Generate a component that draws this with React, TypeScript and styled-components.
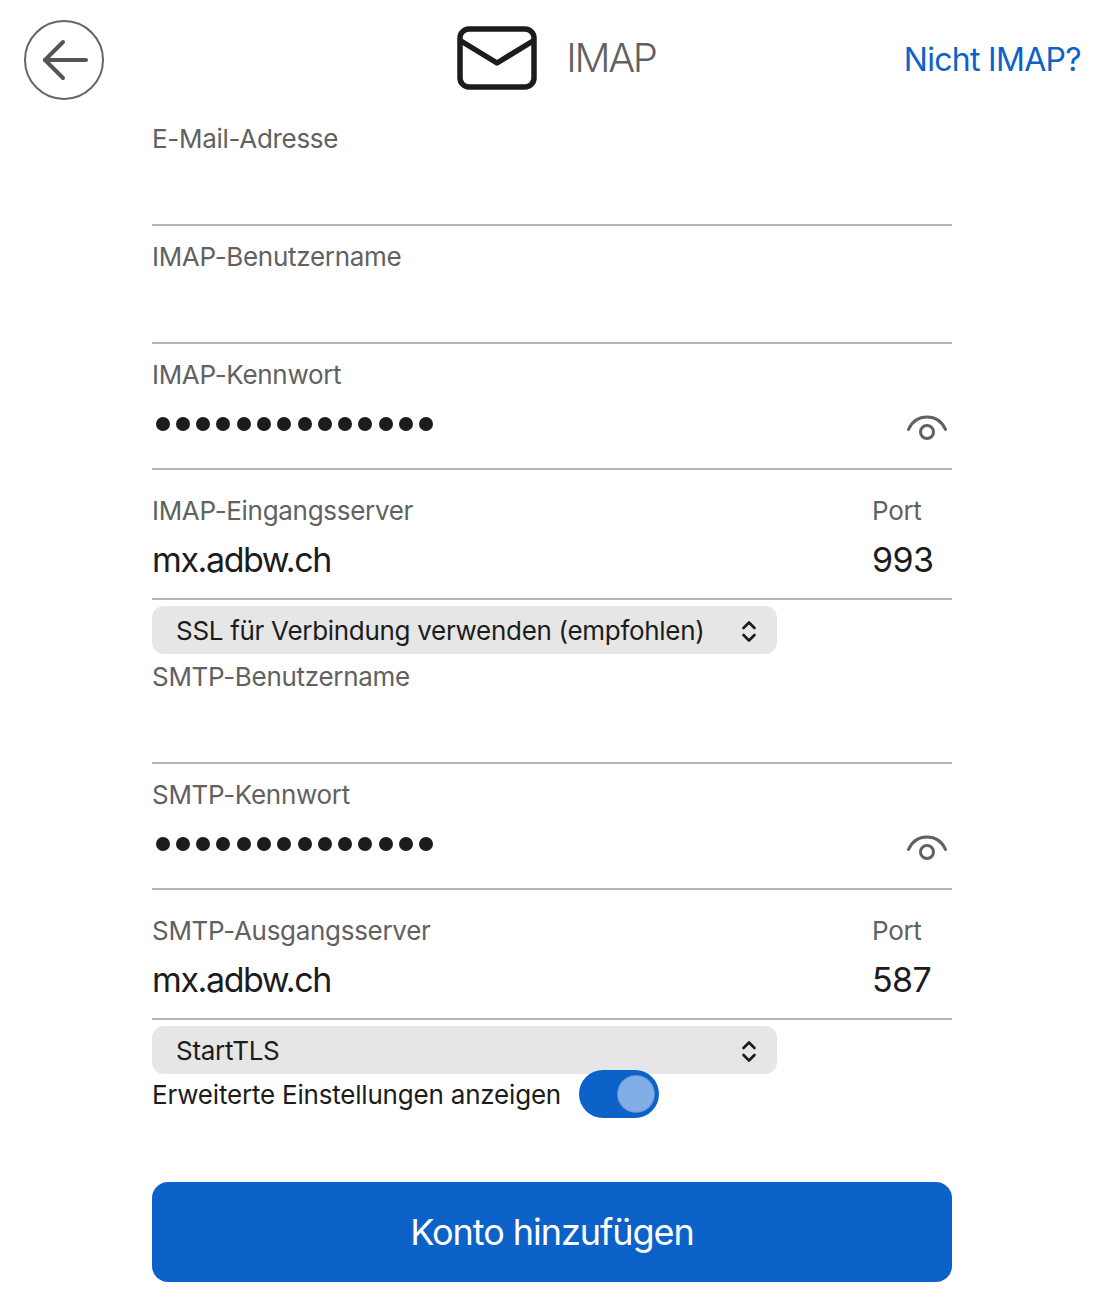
import * as React from 'react';
import styled, { createGlobalStyle } from 'styled-components';

const GlobalStyle = createGlobalStyle`
  html, body {
    margin: 0;
    padding: 0;
    background: #fff;
    font-family: Inter, "Liberation Sans", sans-serif;
  }
`
const Page = styled.div`
  width: 1100px;
  height: 1316px;
  box-sizing: border-box;
  overflow: hidden;
`
const Header = styled.header`
  display: grid;
  grid-template-columns: 1fr auto 1fr;
  align-items: center;
  height: 120px;
  box-sizing: border-box;
  padding: 0 19px 0 24px;
`
const BackButton = styled.button`
  width: 80px;
  height: 80px;
  padding: 0;
  border: 2px solid #666;
  border-radius: 50%;
  background: none;
  display: flex;
  align-items: center;
  justify-content: center;
`
const Title = styled.div`
  display: flex;
  align-items: center;
  gap: 29px;
  margin: -4px 0 0 8px;
`
const TitleText = styled.span`
  margin-top: -2px;
  font-size: 40px;
  font-weight: 300;
  letter-spacing: -2.3px;
  color: #616161;
`
const NotImap = styled.a`
  justify-self: end;
  margin-top: -2px;
  font-size: 32px;
  letter-spacing: -0.7px;
  color: #0c62c9;
`
const Form = styled.main`
  width: 800px;
  margin-left: 152px;
  display: flex;
  flex-direction: column;
`
const Field = styled.div<{ $height: number; $top: number }>`
  height: ${p => p.$height}px;
  box-sizing: border-box;
  padding-top: ${p => p.$top}px;
  border-bottom: 2px solid #b5b5b5;
  display: flex;
  justify-content: space-between;
`
const Column = styled.div<{ $width?: number }>`
  display: flex;
  flex-direction: column;
  width: ${p => (p.$width ? `${p.$width}px` : 'auto')};
`
const Label = styled.label`
  font-size: 26px;
  line-height: 32px;
  letter-spacing: -0.3px;
  color: #616161;
`
const Value = styled.div`
  margin-top: 13px;
  font-size: 34px;
  line-height: 40px;
  letter-spacing: -0.6px;
  color: #1c1c1c;
`
const HostValue = styled(Value)`
  letter-spacing: -1.4px;
`
const SecretRow = styled.div`
  width: 800px;
  margin-top: 15px;
  height: 36px;
  display: flex;
  align-items: center;
  justify-content: space-between;
  padding-right: 5px;
  box-sizing: border-box;
`
const Dots = styled.div`
  display: flex;
  gap: 6.3px;
  margin-left: 3.5px;
`
const Dot = styled.span`
  width: 14px;
  height: 14px;
  border-radius: 50%;
  background: #1c1c1c;
`
const EyeIcon = styled.svg`
  margin-top: 8px;
`
const SelectBox = styled.div`
  width: 625px;
  height: 48px;
  margin-top: 6px;
  box-sizing: border-box;
  padding: 1px 20px 0 24px;
  border-radius: 12px;
  background: #e6e6e6;
  display: flex;
  align-items: center;
  justify-content: space-between;
  font-size: 26px;
  letter-spacing: -0.3px;
  color: #1c1c1c;
`
const ToggleRow = styled.div`
  height: 48px;
  margin-top: -4px;
  display: flex;
  align-items: center;
  gap: 18px;
  font-size: 26px;
  letter-spacing: -0.2px;
  color: #1c1c1c;
`
const Toggle = styled.div`
  width: 80px;
  height: 48px;
  box-sizing: border-box;
  padding-right: 5px;
  border-radius: 24px;
  background: #0c62c9;
  display: flex;
  align-items: center;
  justify-content: flex-end;
`
const Knob = styled.div`
  width: 36px;
  height: 36px;
  border-radius: 50%;
  background: #82ade6;
  box-shadow: 0 0 0 1px #5f8fd4;
`
const SubmitButton = styled.button`
  width: 800px;
  height: 100px;
  margin-top: 64px;
  border: none;
  border-radius: 16px;
  background: #0c62c9;
  color: #fff;
  font-family: inherit;
  font-size: 36px;
  letter-spacing: -1.05px;
`

const Chevrons = () => (
  <svg width="16" height="24" viewBox="0 0 16 24" fill="none" stroke="#1c1c1c" strokeWidth="2.6" strokeLinecap="round" strokeLinejoin="round">
    <path d="M2.500 9 8 3.500 13.500 9" />
    <path d="M2.500 16 8 21.500 13.500 16" />
  </svg>
)

const Eye = () => (
  <EyeIcon width="40" height="26" viewBox="0 0 40 26" fill="none" stroke="#616161" strokeWidth="3" strokeLinecap="round">
    <path d="M1.500 14.500C5 6.500 12 2 20 2s15 4.500 18.500 12.500" />
    <circle cx="20" cy="17" r="6.500" />
  </EyeIcon>
)

const Secret = () => (
  <SecretRow>
    <Dots>
      {Array.from({ length: 14 }).map((_, i) => <Dot key={i} />)}
    </Dots>
    <Eye />
  </SecretRow>
)

export default function App() {
  return (
    <Page>
      <GlobalStyle />
      <Header>
        <BackButton>
          <svg width="50" height="44" viewBox="0 0 50 44" fill="none" stroke="#555" strokeWidth="4" strokeLinecap="round" strokeLinejoin="round">
            <path d="M24 4 6 22l18 18" />
            <path d="M6 22h41" />
          </svg>
        </BackButton>
        <Title>
          <svg width="80" height="64" viewBox="0 0 80 64" fill="none" stroke="#1c1c1c" strokeWidth="5.500" strokeLinejoin="round">
            <rect x="3" y="3" width="74" height="58" rx="9" />
            <path d="M4 15l36 22 36-22" />
          </svg>
          <TitleText>IMAP</TitleText>
        </Title>
        <NotImap>Nicht IMAP?</NotImap>
      </Header>
      <Form>
        <Field $height={106} $top={3}>
          <Label>E-Mail-Adresse</Label>
        </Field>
        <Field $height={118} $top={15}>
          <Label>IMAP-Benutzername</Label>
        </Field>
        <Field $height={126} $top={15}>
          <Column>
            <Label>IMAP-Kennwort</Label>
            <Secret />
          </Column>
        </Field>
        <Field $height={130} $top={25}>
          <Column>
            <Label>IMAP-Eingangsserver</Label>
            <HostValue>mx.adbw.ch</HostValue>
          </Column>
          <Column $width={80}>
            <Label>Port</Label>
            <Value>993</Value>
          </Column>
        </Field>
        <SelectBox>
          SSL für Verbindung verwenden (empfohlen)
          <Chevrons />
        </SelectBox>
        <Field $height={110} $top={7}>
          <Label>SMTP-Benutzername</Label>
        </Field>
        <Field $height={126} $top={15}>
          <Column>
            <Label>SMTP-Kennwort</Label>
            <Secret />
          </Column>
        </Field>
        <Field $height={130} $top={25}>
          <Column>
            <Label>SMTP-Ausgangsserver</Label>
            <HostValue>mx.adbw.ch</HostValue>
          </Column>
          <Column $width={80}>
            <Label>Port</Label>
            <Value>587</Value>
          </Column>
        </Field>
        <SelectBox>
          StartTLS
          <Chevrons />
        </SelectBox>
        <ToggleRow>
          Erweiterte Einstellungen anzeigen
          <Toggle><Knob /></Toggle>
        </ToggleRow>
        <SubmitButton>Konto hinzufügen</SubmitButton>
      </Form>
    </Page>
  )
}
